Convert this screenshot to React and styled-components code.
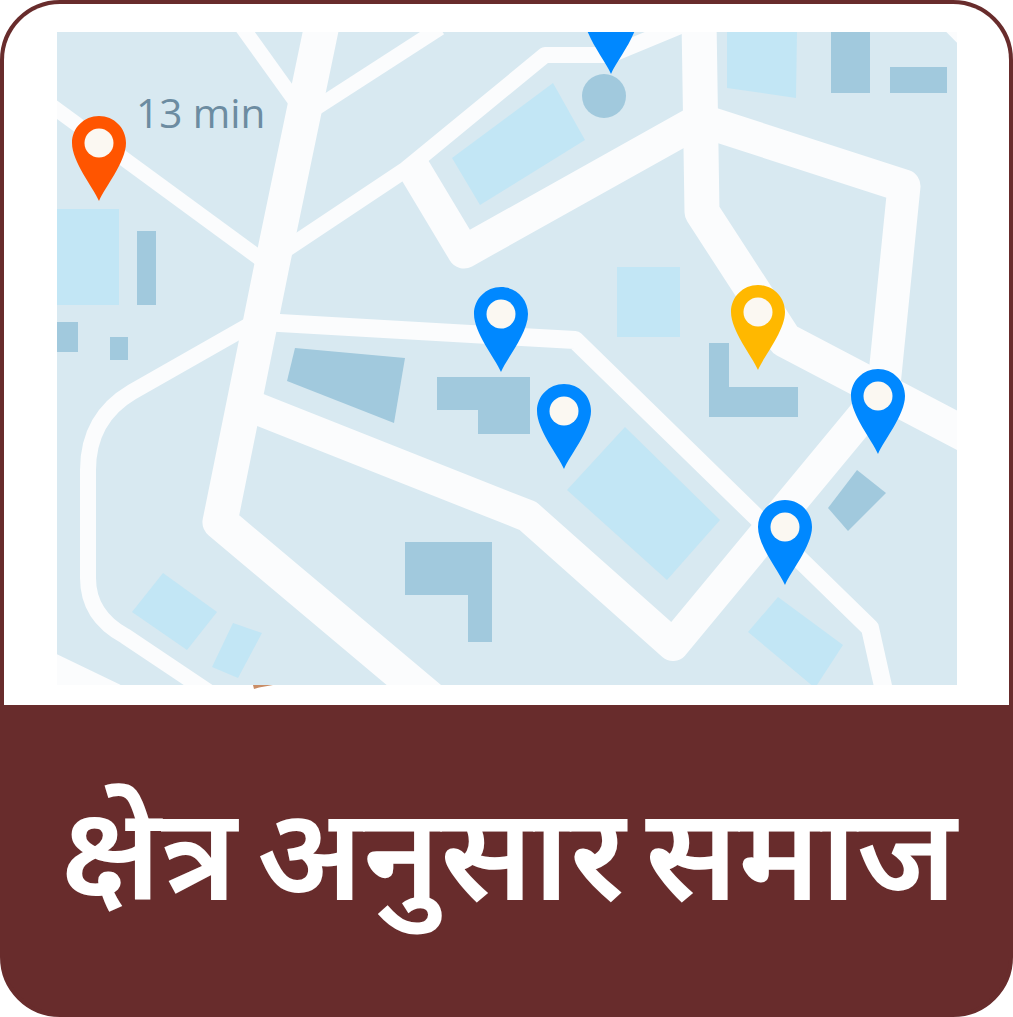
import React from "react";
import styled, { createGlobalStyle } from "styled-components";

const GlobalStyle = createGlobalStyle`
  html, body {
    margin: 0;
    padding: 0;
    background: #ffffff;
  }
`;

const Card = styled.div`
  position: relative;
  box-sizing: border-box;
  width: 1013px;
  height: 1017px;
  display: flex;
  flex-direction: column;
  border: 4px solid #682c2c;
  border-radius: 60px;
  overflow: hidden;
  background: #682c2c;
`;

const MapPanel = styled.div`
  height: 701px;
  box-sizing: border-box;
  padding: 28px 52px 20px 53px;
  flex-shrink: 0;
  background: #ffffff;
`;

const MapDrawing = styled.svg`
  display: block;
  width: 900px;
  height: 653px;
`;

const Speck = styled.span`
  position: absolute;
  left: 249px;
  top: 681px;
  width: 20px;
  height: 4px;
  background: #c98d66;
  clip-path: polygon(0 0, 100% 0, 30% 60%, 5% 100%);
`;

const Footer = styled.div`
  flex: 1;
  display: flex;
  align-items: center;
  justify-content: center;
  padding-left: 5px;
`;

const Title = styled.h1`
  margin: 0;
  padding: 0 0 18px 0;
  color: #ffffff;
  font-family: "Noto Sans", "Noto Sans Devanagari", "Lohit Devanagari", "DejaVu Sans", sans-serif;
  font-size: 130px;
  font-weight: 600;
  line-height: 1;
  word-spacing: -14px;
  white-space: nowrap;
`;

const ROADS = [
  { d: "M323 20 L272 265 L220 522 L440 707", w: 35 },
  { d: "M45 101 L262 260", w: 15 },
  { d: "M237 20 L298 105", w: 15 },
  { d: "M316 108 L440 28", w: 15 },
  { d: "M285 250 L405 170 L545 55 L610 55 L690 22", w: 16 },
  { d: "M410 162 L464 252 L700 120 L904 186 L884 385", w: 33 },
  { d: "M699 20 L702 212 L785 340 L970 437", w: 35 },
  { d: "M262 322 L575 340 L870 628 L885 695", w: 18 },
  { d: "M255 322 L132 392 Q88 418 88 470 L88 578 Q88 616 125 636 L225 703", w: 16 },
  { d: "M255 408 L528 516 L673 645 L880 395", w: 32 },
  { d: "M40 665 L113 700", w: 34 },
  { d: "M940 20 L965 45", w: 8 },
];

const DARK_BLOCKS = [
  "137,231 156,231 156,305 137,305",
  "57,322 78,322 78,352 57,352",
  "110,337 128,337 128,360 110,360",
  "831,32 870,32 870,93 831,93",
  "890,67 947,67 947,93 890,93",
  "295,348 405,358 394,423 287,381",
  "437,377 530,377 530,434 478,434 478,410 437,410",
  "709,343 729,343 729,387 798,387 798,417 709,417",
  "857,470 886,493 848,531 828,508",
  "405,542 492,542 492,642 468,642 468,595 405,595",
];

const LIGHT_BLOCKS = [
  "57,209 119,209 119,305 57,305",
  "553,83 585,140 480,205 452,158",
  "727,32 797,32 796,98 727,88",
  "617,267 680,267 680,337 617,337",
  "625,427 720,520 667,580 567,490",
  "163,573 217,612 187,650 132,612",
  "233,623 262,633 238,678 212,667",
  "778,597 843,645 815,688 748,632",
];

const PINS = [
  { x: 99, top: 116, color: "#ff5500" },
  { x: 611, top: -11, color: "#0088ff" },
  { x: 501, top: 287, color: "#0088ff" },
  { x: 564, top: 384, color: "#0088ff" },
  { x: 758, top: 285, color: "#ffb800" },
  { x: 878, top: 369, color: "#0088ff" },
  { x: 785, top: 500, color: "#0088ff" },
];

const Pin = ({ x, top, color }) => (
  <g transform={`translate(${x} ${top})`}>
    <path
      d="M0 85 C-6 71 -27 46 -27 27 C-27 12 -15 0 0 0 C15 0 27 12 27 27 C27 46 6 71 0 85 Z"
      fill={color}
    />
    <circle cx="0" cy="27" r="14.5" fill="#fbf8f2" />
  </g>
);

const CityMap = () => (
  <MapDrawing viewBox="57 32 900 653">
    <rect x="57" y="32" width="900" height="653" fill="#d8e9f1" />
    {LIGHT_BLOCKS.map((points) => (
      <polygon key={points} points={points} fill="#c2e6f5" />
    ))}
    {ROADS.map((road) => (
      <path
        key={road.d}
        d={road.d}
        fill="none"
        stroke="#fbfcfd"
        strokeWidth={road.w}
        strokeLinejoin="round"
      />
    ))}
    {DARK_BLOCKS.map((points) => (
      <polygon key={points} points={points} fill="#a1c9dd" />
    ))}
    <circle cx="604" cy="96" r="22" fill="#a1c9dd" />
    <text x="136" y="128" fill="#6c8ca1" fontFamily="Open Sans, sans-serif" fontSize="40.5">
      13 min
    </text>
    {PINS.map((pin) => (
      <Pin key={`${pin.x}-${pin.top}`} {...pin} />
    ))}
  </MapDrawing>
);

const App = () => (
  <>
    <GlobalStyle />
    <Card>
      <MapPanel>
        <CityMap />
      </MapPanel>
      <Speck />
      <Footer>
        <Title>क्षेत्र अनुसार समाज</Title>
      </Footer>
    </Card>
  </>
);

export default App;
